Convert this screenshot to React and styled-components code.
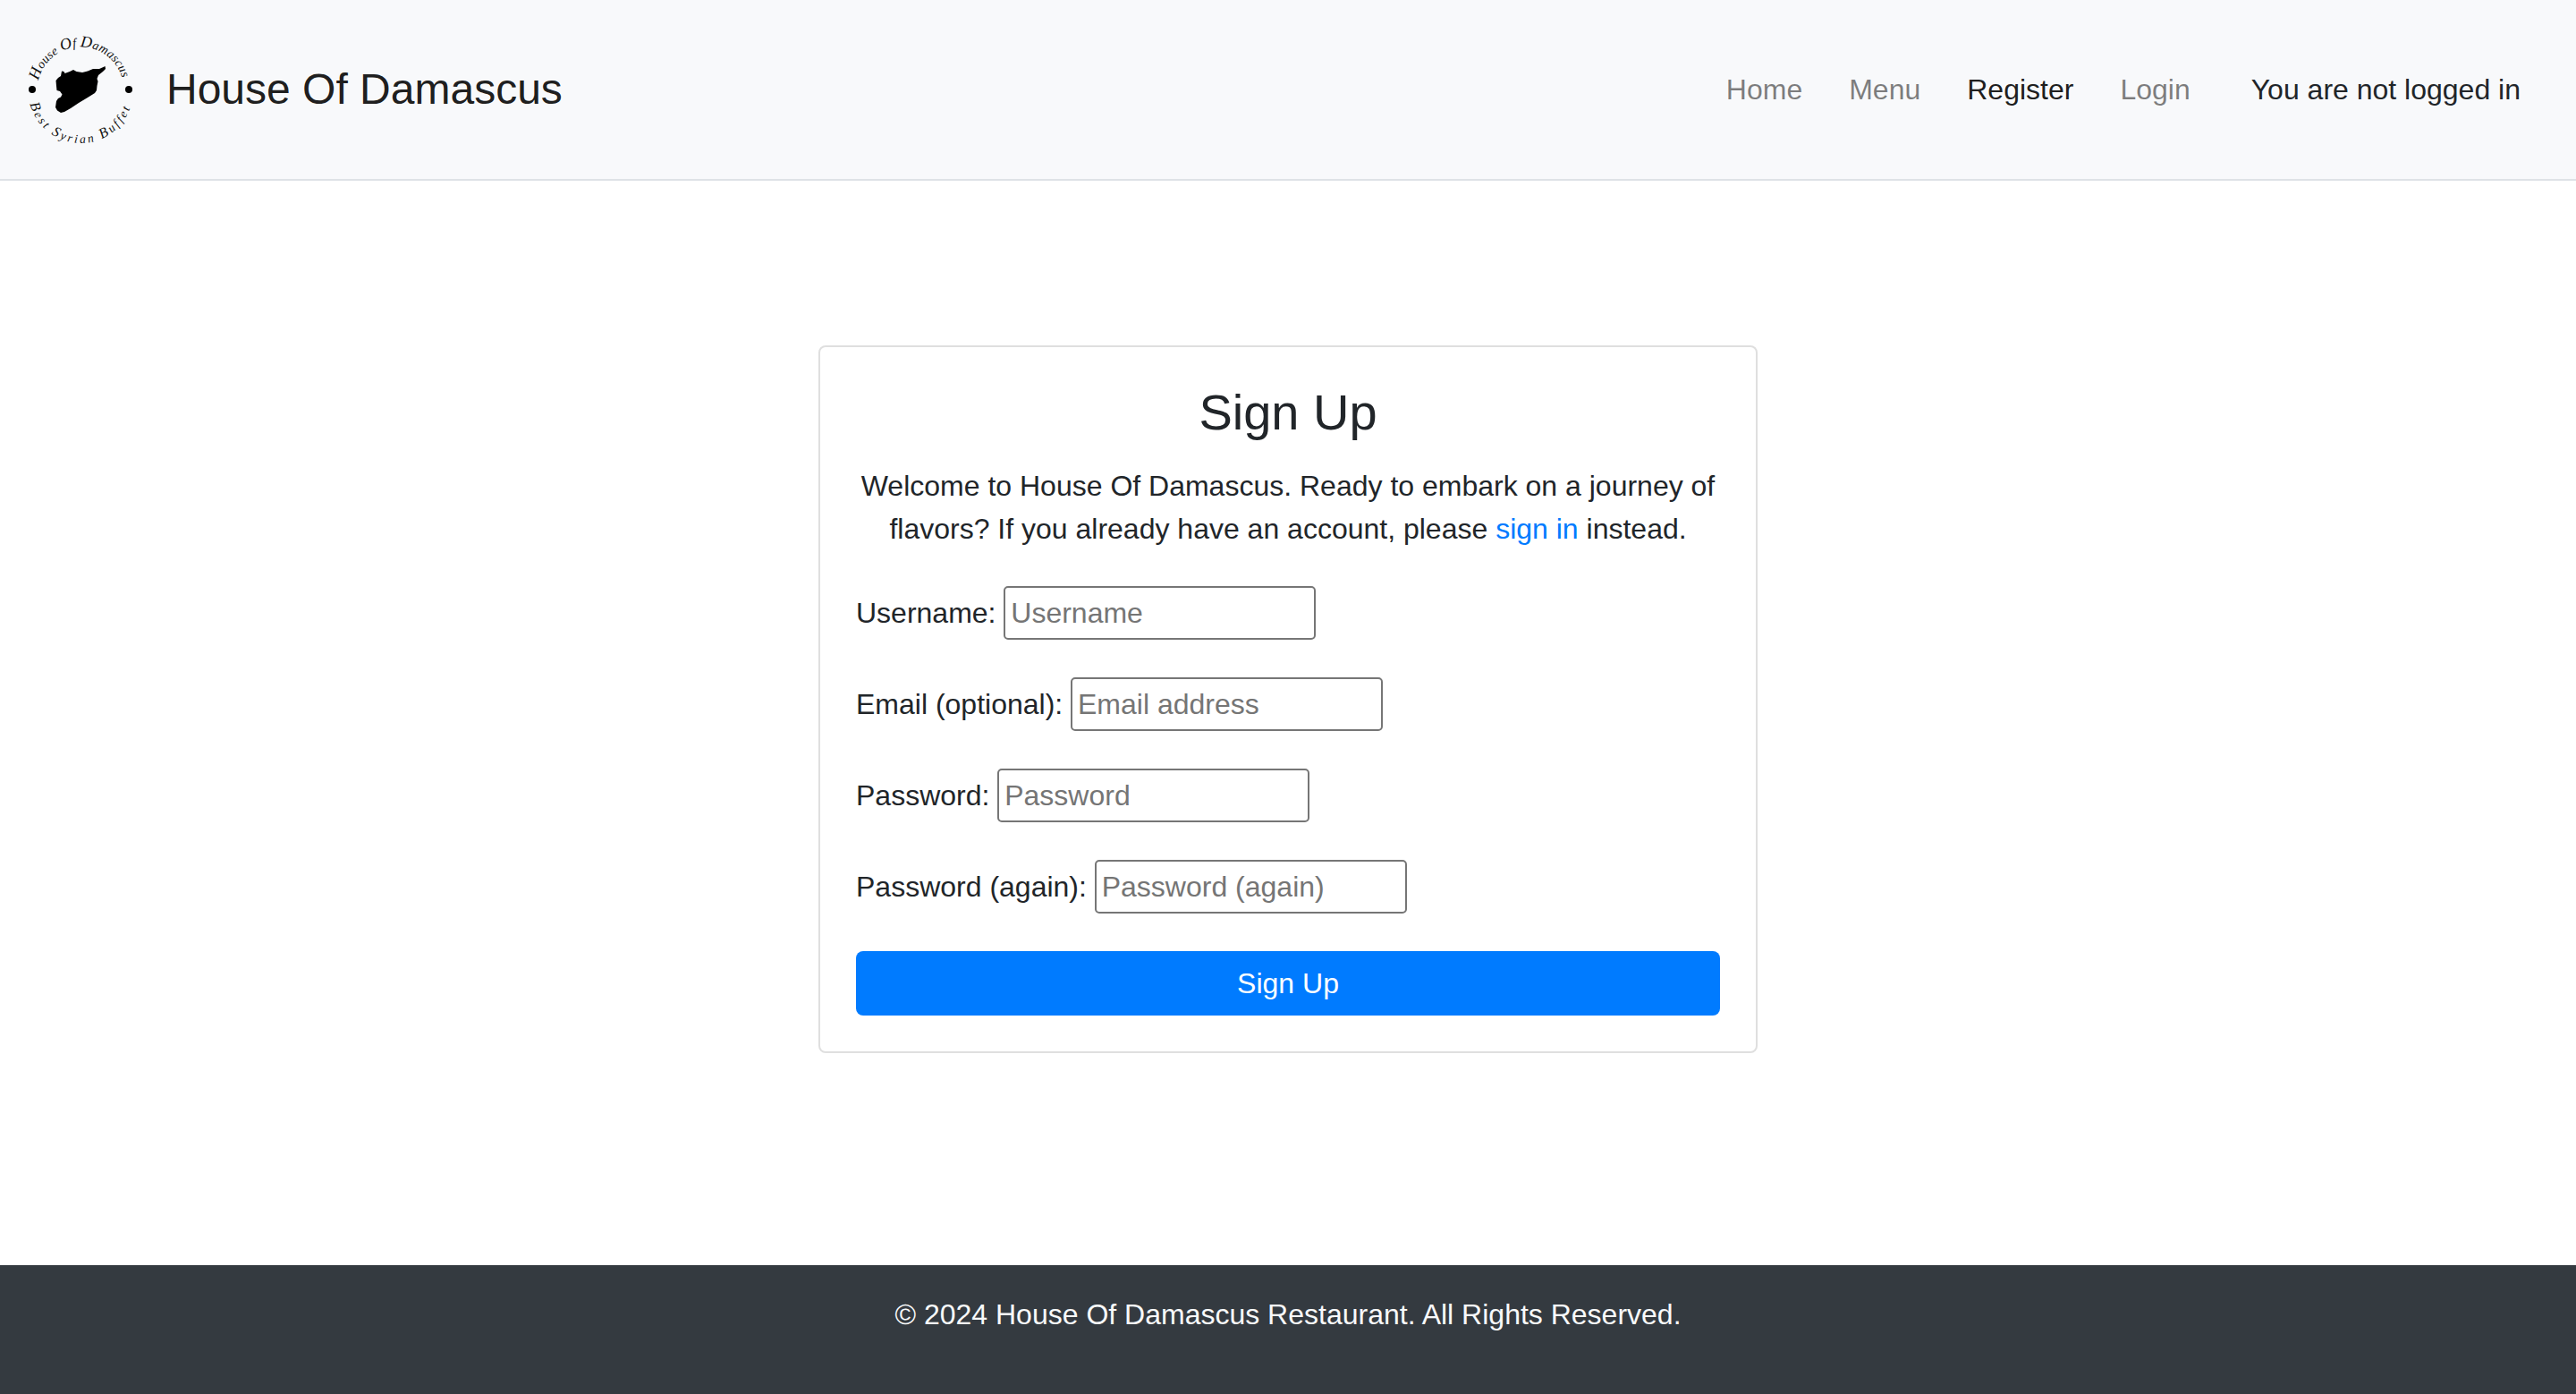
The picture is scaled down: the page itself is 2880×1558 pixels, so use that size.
import React from "react";
import styled, { createGlobalStyle } from "styled-components";

const GlobalStyle = createGlobalStyle`
  *, *::before, *::after { box-sizing: border-box; }
  body {
    margin: 0;
    background: #fff;
    color: #212529;
    font-family: "Liberation Sans", Arial, sans-serif;
    font-size: 32px;
    line-height: 48px;
  }
`;

const Page = styled.div`
  display: flex;
  flex-direction: column;
  height: 1558px;
  overflow: hidden;
`;

const Header = styled.header`
  display: flex;
  align-items: center;
  justify-content: space-between;
  height: 202px;
  padding: 0 62px 0 30px;
  background: #f8f9fb;
  border-bottom: 2px solid #dee2e6;
`;

const Brand = styled.a`
  display: flex;
  align-items: center;
  gap: 36px;
  color: rgba(0, 0, 0, 0.9);
  font-size: 48px;
  line-height: 72px;
  text-decoration: none;
`;

const LogoMark = styled.svg`
  display: block;
  width: 120px;
  height: 120px;
  overflow: visible;
`;

const LogoText = styled.text`
  font-family: "Liberation Serif", serif;
  font-style: italic;
  font-size: ${(p) => p.$size}px;
  line-height: 1;
  fill: #111;
`;

const Initial = styled.tspan`
  font-size: ${(p) => p.$size}px;
`;

const Nav = styled.nav`
  display: flex;
  align-items: center;
  gap: 52px;
`;

const NavLink = styled.a`
  color: ${(p) => (p.$active ? "rgba(0, 0, 0, 0.9)" : "rgba(0, 0, 0, 0.5)")};
  text-decoration: none;
`;

const Status = styled.span`
  margin-left: 16px;
`;

const Main = styled.main`
  flex: 1;
  display: flex;
  justify-content: center;
  align-items: flex-start;
  padding-top: 184px;
`;

const Card = styled.section`
  width: 1050px;
  height: 791px;
  padding: 39px 40px 40px;
  border: 2px solid #dfdfdf;
  border-radius: 8px;
  background: #fff;
`;

const Title = styled.h1`
  margin: 0 0 24px;
  font-size: 56px;
  font-weight: 400;
  line-height: 68px;
  text-align: center;
`;

const Intro = styled.p`
  margin: 0 0 40px;
  text-align: center;
`;

const InlineLink = styled.a`
  color: #007bff;
  text-decoration: none;
`;

const Form = styled.form`
  display: flex;
  flex-direction: column;
  gap: 42px;
`;

const Field = styled.label`
  display: flex;
  align-items: center;
  gap: 8.8px;
  height: 60px;
`;

const Input = styled.input`
  width: 349px;
  height: 60px;
  padding: 2px 6px;
  border: 2px solid #767676;
  border-radius: 5px;
  background: #fff;
  font: inherit;
  &::placeholder { color: #757575; opacity: 1; }
`;

const SubmitButton = styled.button`
  height: 72px;
  padding: 0;
  border: 0;
  border-radius: 8px;
  background: #007bff;
  color: #fff;
  font: inherit;
`;

const Footer = styled.footer`
  height: 144px;
  padding-top: 31px;
  background: #343a40;
  color: #f8f9fa;
  text-align: center;
`;

const fields = [
  { label: "Username:", placeholder: "Username", type: "text" },
  { label: "Email (optional):", placeholder: "Email address", type: "email" },
  { label: "Password:", placeholder: "Password", type: "password" },
  { label: "Password (again):", placeholder: "Password (again)", type: "password" },
];

const links = ["Home", "Menu", "Register", "Login"];

function Logo() {
  return (
    <LogoMark viewBox="30 40 120 120">
      <defs>
        <path id="arc-top" d="M43 90 A48.3 48.3 0 0 1 137.2 90" />
        <path id="arc-bottom" d="M33.5 116 A58.5 58.5 0 0 0 147.5 113" />
      </defs>
      <LogoText $size={14}>
        <textPath href="#arc-top" textLength="127" lengthAdjust="spacing">
          <Initial $size={18}>H</Initial>ouse <Initial $size={18}>O</Initial>f <Initial $size={18}>D</Initial>amascus
        </textPath>
      </LogoText>
      <LogoText $size={13.5}>
        <textPath href="#arc-bottom" textLength="149" lengthAdjust="spacing">
          <Initial $size={16}>B</Initial>est <Initial $size={16}>S</Initial>yrian <Initial $size={16}>B</Initial>uffet
        </textPath>
      </LogoText>
      <circle cx="36" cy="100" r="4" />
      <circle cx="144" cy="100" r="4" />
      <path d="M62.5 90 L65 87 L68 85 L69 79.5 L71.5 80 L72.5 82 L78 80 L82 78 L85.5 80 L92 81 L98 79.5 L104 77 L111 77 L115.5 75 L117.5 74 L118 77 L115 80 L110 84 L108.5 88 L109.5 91 L108.5 96 L108 101 L106 104 L98 109 L88 115 L79 121 L72 125 L68 126 L64 123.5 L62 120 L63 113 L65 110 L68 108.5 L69.5 105.5 L67 102 L63.5 101 L63 96 Z" />
    </LogoMark>
  );
}

export default function App() {
  return (
    <>
      <GlobalStyle />
      <Page>
        <Header>
          <Brand href="#">
            <Logo />
            <span>House Of Damascus</span>
          </Brand>
          <Nav>
            {links.map((name) => (
              <NavLink key={name} href="#" $active={name === "Register"}>{name}</NavLink>
            ))}
            <Status>You are not logged in</Status>
          </Nav>
        </Header>
        <Main>
          <Card>
            <Title>Sign Up</Title>
            <Intro>
              Welcome to House Of Damascus. Ready to embark on a journey of flavors? If you already have an account,
              please <InlineLink href="#">sign in</InlineLink> instead.
            </Intro>
            <Form>
              {fields.map((f) => (
                <Field key={f.label}>
                  {f.label}
                  <Input type={f.type} placeholder={f.placeholder} />
                </Field>
              ))}
              <SubmitButton type="button">Sign Up</SubmitButton>
            </Form>
          </Card>
        </Main>
        <Footer>© 2024 House Of Damascus Restaurant. All Rights Reserved.</Footer>
      </Page>
    </>
  );
}
